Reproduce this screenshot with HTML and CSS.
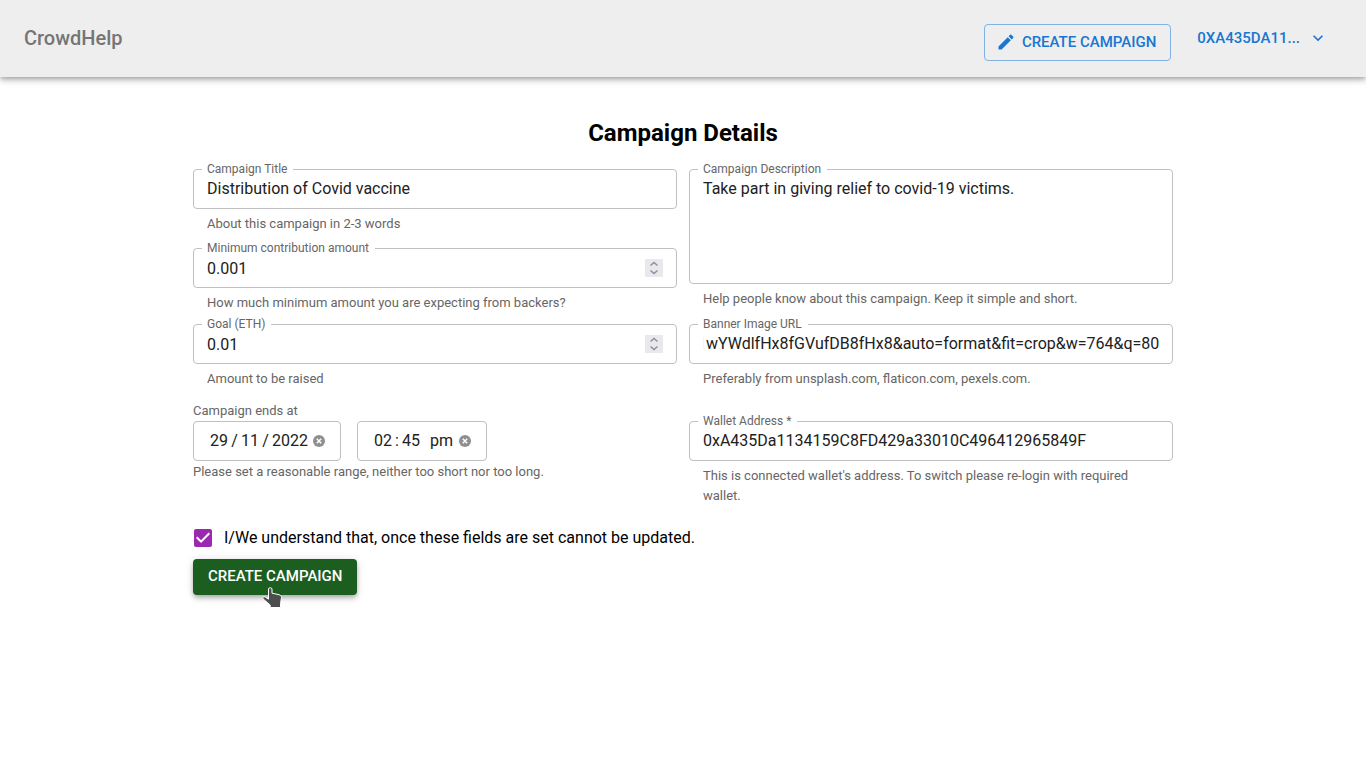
FILE: index.html
```html
<!DOCTYPE html>
<html lang="en">
<head>
<meta charset="utf-8">
<meta name="viewport" content="width=device-width, initial-scale=1">
<title>CrowdHelp</title>
<link rel="stylesheet" href="styles.css">
</head>
<body>
<header class="app-bar">
  <a class="brand" href="#">CrowdHelp</a>
  <nav class="actions">
    <button class="btn btn-outlined" type="button">
      <svg class="icon" viewBox="0 0 24 24" aria-hidden="true"><path d="M3 17.25V21h3.75L17.81 9.94l-3.75-3.75L3 17.25zM20.71 7.04c.39-.39.39-1.02 0-1.41l-2.34-2.34a.996.996 0 0 0-1.41 0l-1.83 1.83 3.75 3.75 1.83-1.83z"/></svg>
      CREATE CAMPAIGN
    </button>
    <button class="btn btn-text" type="button">
      0XA435DA11...
      <svg class="icon" viewBox="0 0 24 24" aria-hidden="true"><path d="M7.41 8.59 12 13.17l4.59-4.58L18 10l-6 6-6-6 1.41-1.41z"/></svg>
    </button>
  </nav>
</header>
<main class="page">
  <h1 class="title">Campaign Details</h1>
  <form class="form">
    <div class="stack">
      <div class="field">
        <div class="box">
          <label class="label" for="name">Campaign Title</label>
          <input class="input" id="name" type="text" value="Distribution of Covid vaccine">
        </div>
        <p class="helper">About this campaign in 2-3 words</p>
      </div>
      <div class="field">
        <div class="box">
          <label class="label" for="minimum">Minimum contribution amount</label>
          <input class="input" id="minimum" type="number" step="0.001" value="0.001">
          <svg class="spinner" viewBox="0 0 18 18" aria-hidden="true"><path d="M5.5 6.5 9 3.500 12.500 6.500M5.500 11.500 9 14.500 12.500 11.500"/></svg>
        </div>
        <p class="helper">How much minimum amount you are expecting from backers?</p>
      </div>
    </div>
    <div class="field">
      <div class="box">
        <label class="label" for="description">Campaign Description</label>
        <textarea class="input area" id="description" rows="4">Take part in giving relief to covid-19 victims.</textarea>
      </div>
      <p class="helper">Help people know about this campaign. Keep it simple and short.</p>
    </div>
    <div class="field">
      <div class="box">
        <label class="label" for="goal">Goal (ETH)</label>
        <input class="input" id="goal" type="number" step="0.01" value="0.01">
        <svg class="spinner" viewBox="0 0 18 18" aria-hidden="true"><path d="M5.5 6.5 9 3.500 12.500 6.500M5.500 11.500 9 14.500 12.500 11.500"/></svg>
      </div>
      <p class="helper">Amount to be raised</p>
    </div>
    <div class="field">
      <div class="box">
        <label class="label" for="banner">Banner Image URL</label>
        <input class="input" id="banner" type="text" value="https://images.unsplash.com/photo?ixid=MnwxMjA3fDB8MHxwaG90by1wYWdlfHx8fGVufDB8fHx8&amp;auto=format&amp;fit=crop&amp;w=764&amp;q=80">
      </div>
      <p class="helper">Preferably from unsplash.com, flaticon.com, pexels.com.</p>
    </div>
    <div class="deadline" role="group" aria-labelledby="ends">
      <span class="caption" id="ends">Campaign ends at</span>
      <div class="pickers">
        <div class="box date">
          <input class="seg" aria-label="Day" value="29"><span class="sep">/</span>
          <input class="seg" aria-label="Month" value="11"><span class="sep">/</span>
          <input class="seg year" aria-label="Year" value="2022">
          <button class="clear" type="button" aria-label="Clear date"><svg viewBox="0 0 12 12"><circle cx="6" cy="6" r="6"/><path d="m3.800 3.800 4.400 4.400m0-4.400-4.400 4.400"/></svg></button>
        </div>
        <div class="box time">
          <input class="seg" aria-label="Hours" value="02"><span class="sep colon">:</span>
          <input class="seg" aria-label="Minutes" value="45">
          <input class="seg period" aria-label="AM or PM" value="pm">
          <button class="clear" type="button" aria-label="Clear time"><svg viewBox="0 0 12 12"><circle cx="6" cy="6" r="6"/><path d="m3.800 3.800 4.400 4.400m0-4.400-4.400 4.400"/></svg></button>
        </div>
      </div>
      <p class="caption">Please set a reasonable range, neither too short nor too long.</p>
    </div>
    <div class="field wallet">
      <div class="box">
        <label class="label" for="wallet">Wallet Address *</label>
        <input class="input" id="wallet" type="text" value="0xA435Da1134159C8FD429a33010C496412965849F">
      </div>
      <p class="helper">This is connected wallet's address. To switch please re-login with required wallet.</p>
    </div>
    <div class="footer">
      <label class="consent"><input class="check" type="checkbox" checked>I/We understand that, once these fields are set cannot be updated.</label>
      <div class="submit">
        <button class="btn btn-contained" type="button">CREATE CAMPAIGN</button>
        <svg class="pointer" viewBox="0 0 22 24" aria-hidden="true"><path d="M7.500 3C8 1.200 10.500 1.200 11 3V7.200L18 8.700C19.700 9.200 20.500 10.200 20.500 11.500L19.500 17.500V21.500H9.200V19L2 12.800C1 11.300 2.800 10.200 4.200 11L7.500 13.200Z"/></svg>
      </div>
    </div>
  </form>
</main>
<script src="script.js"></script>
</body>
</html>
```

FILE: styles.css
```css
* { box-sizing: border-box; }
body { margin: 0; background: #fff; color: #000; font: 16px/24px Roboto, "Liberation Sans", sans-serif; }
button, input, textarea { font: inherit; color: inherit; }

.app-bar {
  display: flex; align-items: center; justify-content: space-between;
  min-height: 77px; padding: 0 24px 2px; background: #eee;
  box-shadow: 0 2px 4px -1px rgba(0,0,0,.2), 0 4px 5px 0 rgba(0,0,0,.14), 0 1px 10px 0 rgba(0,0,0,.12);
}
.brand { color: #757575; font-size: 20px; font-weight: 500; text-decoration: none; }
.actions { display: flex; align-items: center; gap: 18px; }
.btn { display: flex; align-items: center; justify-content: center; border: 0; border-radius: 4px; background: none; font-size: 15px; font-weight: 500; cursor: pointer; }
.icon { width: 20px; height: 20px; fill: currentColor; }
.btn-outlined { gap: 6px; height: 37px; margin-top: 10px; padding: 0 14px 2px 11px; border: 1px solid #7fb2e5; color: #1976d2; }
.btn-text { gap: 8px; height: 37px; padding: 0 14px 0 8px; color: #1976d2; }

.page { max-width: 1012px; margin: 0 auto; padding: 40px 16px; }
.title { margin: 0 0 20px; font-size: 24px; line-height: 32px; font-weight: 700; text-align: center; }
.form { display: grid; grid-template-columns: repeat(2, minmax(0, 1fr)); gap: 12px; }
.stack { display: flex; flex-direction: column; gap: 15px; }
.box { position: relative; display: flex; align-items: center; min-height: 40px; padding: 0 13px; border: 1px solid #c0c0c0; border-radius: 4px; }
.label { position: absolute; top: -9px; left: 8px; padding: 0 6px 0 5px; background: #fff; color: #666; font-size: 12px; line-height: 16px; white-space: nowrap; }
.input { flex: 1; min-width: 0; height: 38px; padding: 0; border: 0; outline: 0; background: none; color: #212121; appearance: textfield; }
.input[type="text"] { padding-bottom: 1px; }
.input::-webkit-inner-spin-button { appearance: none; margin: 0; }
.area { height: 113px; padding: 7px 0; resize: none; appearance: none; }
.spinner { width: 18px; height: 18px; background: #e9e9ed; fill: none; stroke: #8f8f9d; stroke-width: 1.5; }
.helper { margin: 5px 14px 0; color: #666; font-size: 13px; line-height: 20px; margin-bottom: -1px; }
.caption { display: block; margin: 0; color: #666; font-size: 13px; line-height: 20px; }
.deadline { padding-top: 1px; }
.deadline p { margin-top: 1px; }
.wallet { padding-top: 21px; }
.pickers { display: flex; gap: 16px; }
.date { width: 148px; padding: 0 15px; }
.time { width: 130px; padding: 0 15px; }
.seg { width: 20px; height: 24px; padding: 0 1px; border: 0; outline: 0; background: none; color: #212121; }
.year { width: 38px; }
.period { width: 25px; margin-left: 8px; }
.sep { width: 11px; text-align: center; color: #212121; }
.colon { width: 8px; }
.clear { flex: none; display: flex; width: 12px; height: 12px; margin-left: auto; padding: 0; border: 0; background: none; }
.clear circle { fill: #8f8f8f; }
.clear path { stroke: #fff; stroke-width: 1.5; }
.footer { grid-column: 1 / -1; }
.consent { display: flex; align-items: center; gap: 12px; width: fit-content; min-height: 42px; padding-left: 1px; }
.check { flex: none; width: 18px; height: 18px; margin: 0; border-radius: 2px; background: #fff; border: 2px solid #757575; appearance: none; }
.check:checked { border: 0; background: #9c27b0; }
.check:checked::before { content: ""; display: block; width: 18px; height: 18px; background: #fff; clip-path: polygon(39% 78%, 11% 50%, 19% 42%, 39% 62%, 81% 20%, 89% 28%); }
.submit { position: relative; width: fit-content; }
.btn-contained { height: 36px; padding: 0 15px 2px; background: #1b5e20; color: #fff; box-shadow: 0 2px 4px -1px rgba(0,0,0,.2), 0 4px 5px 0 rgba(0,0,0,.14), 0 1px 10px 0 rgba(0,0,0,.12); }
.pointer { position: absolute; left: 68px; top: 27px; width: 22px; height: 24px; fill: #4d4d4d; stroke: #fff; stroke-width: 1; pointer-events: none; }
@media (max-width: 700px) { .form { grid-template-columns: minmax(0, 1fr); } }
```

FILE: script.js
```js
const banner = document.getElementById("banner");
banner.scrollLeft = banner.scrollWidth;
```
